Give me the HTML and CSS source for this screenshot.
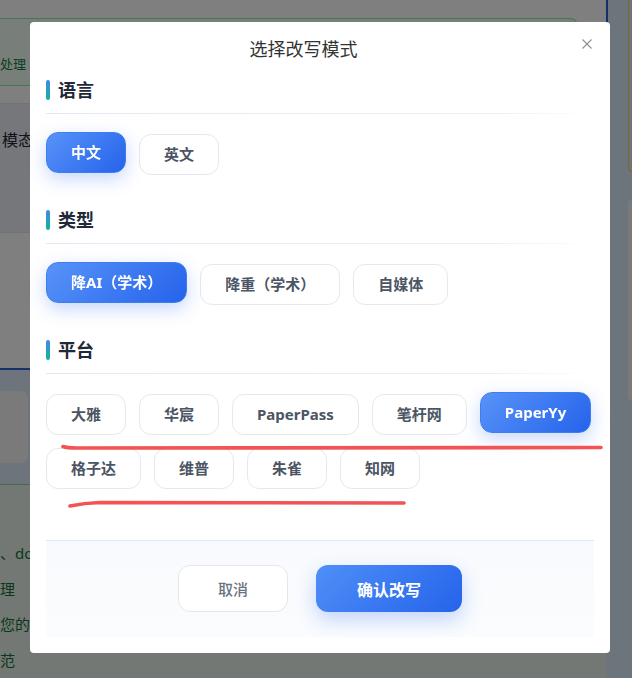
FILE: index.html
```html
<!DOCTYPE html>
<html lang="zh-CN">
<head>
  <meta charset="UTF-8">
  <meta name="viewport" content="width=device-width, initial-scale=1.0">
  <title>选择改写模式</title>
  <link rel="stylesheet" href="styles.css">
</head>
<body>
  <div class="page">
    <div class="main">
      <div class="tip">处理</div>
      <div class="panel">模态</div>
      <div class="upload">
        <div class="drop"></div>
      </div>
      <div class="notes">
        <p>、docx</p>
        <p>理</p>
        <p>您的文</p>
        <p>范</p>
      </div>
    </div>
    <div class="side">
      <div class="rail"></div>
      <div class="side-body">
        <div class="card card--warn"></div>
        <div class="card"></div>
      </div>
    </div>
  </div>

  <div class="overlay"></div>

  <div class="modal">
    <div class="modal-head">
      <span class="title">选择改写模式</span>
      <span class="close">
        <svg width="10" height="10" viewBox="0 0 10 10"><path d="M0.5 0.5L9.5 9.5M9.5 0.5L0.5 9.5" stroke="#8f8f8f" stroke-width="1.1" fill="none"/></svg>
      </span>
    </div>

    <div class="section">
      <div class="sec-head"><span class="bar"></span>语言</div>
      <div class="opts">
        <button class="opt on">中文</button>
        <button class="opt">英文</button>
      </div>
    </div>

    <div class="section">
      <div class="sec-head"><span class="bar"></span>类型</div>
      <div class="opts">
        <button class="opt on">降AI（学术）</button>
        <button class="opt">降重（学术）</button>
        <button class="opt">自媒体</button>
      </div>
    </div>

    <div class="section">
      <div class="sec-head"><span class="bar"></span>平台</div>
      <div class="opts">
        <button class="opt">大雅</button>
        <button class="opt">华宸</button>
        <button class="opt">PaperPass</button>
        <button class="opt">笔杆网</button>
        <button class="opt on">PaperYy</button>
        <button class="opt">格子达</button>
        <button class="opt">维普</button>
        <button class="opt">朱雀</button>
        <button class="opt">知网</button>
      </div>
    </div>

    <div class="foot">
      <button class="btn-cancel">取消</button>
      <button class="btn-ok">确认改写</button>
    </div>
  </div>

  <!-- hand-drawn marks on the screenshot -->
  <svg class="marks" width="632" height="678" viewBox="0 0 632 678">
    <path d="M63 446.5 Q67 448 76 448 L601 447.5" stroke="#f25353" stroke-width="3.6" stroke-linecap="round" fill="none"/>
    <path d="M70 506 Q84 503 100 502.5 L404 503" stroke="#f25353" stroke-width="3.6" stroke-linecap="round" fill="none"/>
  </svg>
</body>
</html>
```

FILE: styles.css
```css
* {
  box-sizing: border-box;
}
body {
  margin: 0;
  width: 632px;
  height: 678px;
  overflow: hidden;
  background: #fff;
  font-family: "Noto Sans", "Noto Sans CJK SC", sans-serif;
}
button {
  font-family: inherit;
  cursor: pointer;
}

/* page behind the dialog */
.page {
  display: flex;
  height: 678px;
}
.main {
  width: 606px;
  display: flex;
  flex-direction: column;
}
.tip {
  margin-top: 18px;
  margin-right: 28px;
  height: 68px;
  padding-top: 34px;
  border: 1px solid #86efac;
  border-left: 0;
  border-radius: 0 8px 8px 0;
  background: #f0fdf4;
  color: #15803d;
  font-size: 13px;
  line-height: 22px;
}
.panel {
  margin-top: 17px;
  height: 130px;
  padding: 25px 0 0 2px;
  border-top: 1px solid #e3e5ea;
  border-bottom: 1px solid #e3e5ea;
  background: #eceff5;
  color: #1f2937;
  font-size: 16px;
  line-height: 22px;
}
.upload {
  margin-top: 135px;
  height: 116px;
  padding-top: 21px;
  border-top: 2px solid #2f63d6;
  background: #dde9f7;
}
.drop {
  width: 28px;
  height: 72px;
  border-radius: 0 7px 7px 0;
  background: #f4f4f4;
}
.notes {
  flex: 1;
  padding-top: 51px;
  border-top: 1px solid #86d9a0;
  background: #e7f0e8;
  color: #15703d;
  font-size: 15px;
  line-height: 35.5px;
}
.notes p {
  margin: 0;
  white-space: nowrap;
}

.side {
  flex: 1;
  display: flex;
  background: #d9ebf8;
}
.rail {
  width: 2px;
  height: 300px;
  background: #2f5fcf;
}
.side-body {
  flex: 1;
  padding-left: 20px;
}
.card {
  margin-top: 28px;
  height: 200px;
  border-radius: 8px 0 0 8px;
  background: #f4f4f4;
}
.card--warn {
  margin-top: -10px;
  height: 182px;
  border: 1px solid #fcd34d;
  border-right: 0;
  background: #dbe9f3;
}

/* dialog */
.overlay {
  position: fixed;
  inset: 0;
  background: rgba(0, 0, 0, .5);
}
.modal {
  position: fixed;
  left: 30px;
  top: 22px;
  width: 580px;
  padding: 15px 16px 16px;
  border-radius: 4px;
  background: #fff;
}
.modal-head {
  position: relative;
  margin-bottom: 17px;
  padding-right: 33px;
  text-align: center;
  color: #333;
  font-size: 18px;
  line-height: 24px;
}
.close {
  position: absolute;
  right: 2px;
  top: 2px;
  width: 10px;
  height: 10px;
  line-height: 0;
}

.section + .section {
  margin-top: 33px;
}
.sec-head {
  position: relative;
  display: flex;
  align-items: center;
  gap: 8px;
  padding-bottom: 12px;
  color: #1f2937;
  font-size: 18px;
  font-weight: 700;
  line-height: 24px;
}
.sec-head::after {
  content: "";
  position: absolute;
  left: 0;
  right: 0;
  bottom: 0;
  height: 1px;
  background: linear-gradient(90deg, #e3e8f1, #eceef7 80%, rgba(240, 242, 250, 0));
}
.bar {
  width: 4px;
  height: 20px;
  border-radius: 2px;
  background: linear-gradient(180deg, #3b8ce6, #17b09b);
}

.opts {
  display: flex;
  flex-wrap: wrap;
  gap: 13px;
  margin-top: 20px;
}
.opt {
  height: 41px;
  padding: 0 24px;
  border: 1px solid #e6e8ec;
  border-radius: 12px;
  background: #fff;
  color: #4b5563;
  font-size: 15px;
  font-weight: 700;
  line-height: 39px;
}
.opt.on {
  border-color: #3d7ef2;
  background: linear-gradient(135deg, #5893f8, #2563eb);
  color: #fff;
  transform: translateY(-2px);
  box-shadow: 0 6px 18px rgba(37, 99, 235, .26);
}

.foot {
  display: flex;
  justify-content: center;
  gap: 28px;
  margin-top: 51px;
  padding: 24px 0 25px;
  border-top: 1px solid #dbeafe;
  background: linear-gradient(180deg, #f8fafd, #fafcfe);
}
.btn-cancel {
  height: 47px;
  padding: 0 39px;
  border: 1px solid #e5e7eb;
  border-radius: 12px;
  background: #fff;
  color: #6b7280;
  font-size: 15px;
  font-weight: 500;
}
.btn-ok {
  height: 47px;
  padding: 0 41px;
  border: 0;
  border-radius: 12px;
  background: linear-gradient(135deg, #4f8ff7, #2563eb);
  color: #fff;
  font-size: 16px;
  font-weight: 700;
  box-shadow: 0 8px 20px rgba(37, 99, 235, .26);
}

.marks {
  position: fixed;
  left: 0;
  top: 0;
  pointer-events: none;
}
```
